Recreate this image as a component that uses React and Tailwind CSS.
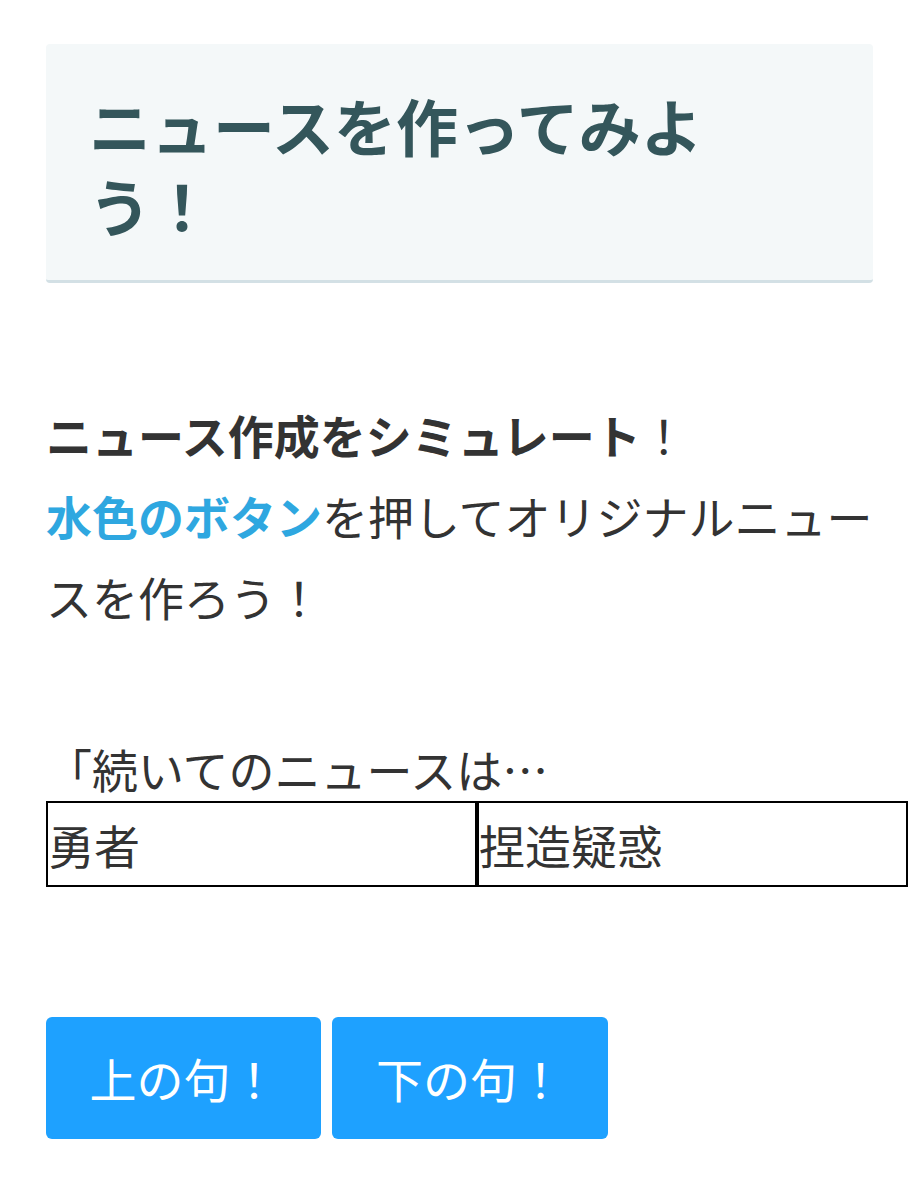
export default function App() {
  return (
    <div className="min-h-[1200px] bg-white px-[46px] pt-[44px] font-['Noto_Sans_CJK_JP','Noto_Sans',sans-serif] text-[#333]">
      {/* Header */}
      <div className="w-[827px] rounded-[4px] border-b-[3px] border-[#d3e0e5] bg-[#f4f8f9] pl-[43px] pr-[110px] pt-[41px] pb-[35px]">
        <h1 className="text-[62px] font-bold leading-[80px] text-[#34565b]">ニュースを作ってみよう！</h1>
      </div>

      {/* Intro */}
      <p className="mt-[111px] w-[840px] text-[46px] leading-[81px]">
        <span className="font-bold">ニュース作成をシミュレート</span>！
        <br />
        <span className="font-bold text-[#2ea7e0]">水色のボタン</span>を押してオリジナルニュースを作ろう！
      </p>

      {/* Result */}
      <p className="mt-[98px] text-[46px] leading-[66px]">「続いてのニュースは…</p>
      <div className="grid w-[862px] grid-cols-2">
        <div className="flex h-[86px] items-center border-2 border-black text-[46px] leading-none">勇者</div>
        <div className="flex h-[86px] items-center border-2 border-black text-[46px] leading-none">捏造疑惑</div>
      </div>

      {/* Buttons */}
      <div className="mt-[130px] flex gap-[11px]">
        <button className="h-[122px] w-[275px] rounded-[6px] bg-[#1ea1ff] text-[47px] text-white">上の句！</button>
        <button className="h-[122px] w-[276px] rounded-[6px] bg-[#1ea1ff] text-[47px] text-white">下の句！</button>
      </div>
    </div>
  );
}
